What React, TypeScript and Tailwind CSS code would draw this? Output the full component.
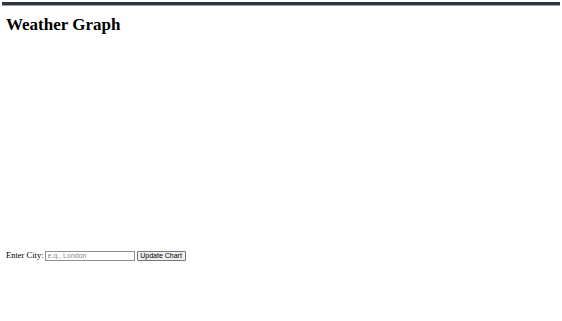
import React from "react";

export default function App() {
  return (
    <div className="w-[562px] h-[321px] bg-white relative" style={{ fontFamily: '"Liberation Serif", serif' }}>
      <div className="pt-[2px] px-[2px]">
        <div className="h-[3px] bg-[#2b3641]" />
        <div className="h-[1px] bg-[#9aa3ab]" />
      </div>
      <div className="px-[6px]">
        <h2 className="text-[17px] font-bold leading-[20px] mt-[9px] text-black">Weather Graph</h2>
        <div className="h-[215px]" />
        <div className="flex items-center text-[8.5px] leading-[11px] text-black">
          <span>Enter City:</span>
          <input
            placeholder="e.g., London"
            className="ml-[1px] w-[90px] h-[10px] border border-[#8f8f8f] px-[2px] text-[7px] leading-[8px] placeholder:text-[#8a8a8a] outline-none"
            style={{ fontFamily: '"Liberation Sans", sans-serif' }}
          />
          <button
            className="ml-[2px] w-[49px] h-[10px] border border-[#767676] bg-[#efefef] rounded-[1px] text-[7px] leading-[8px] text-black flex items-center justify-center"
            style={{ fontFamily: '"Liberation Sans", sans-serif' }}
          >
            Update Chart
          </button>
        </div>
      </div>
    </div>
  );
}
